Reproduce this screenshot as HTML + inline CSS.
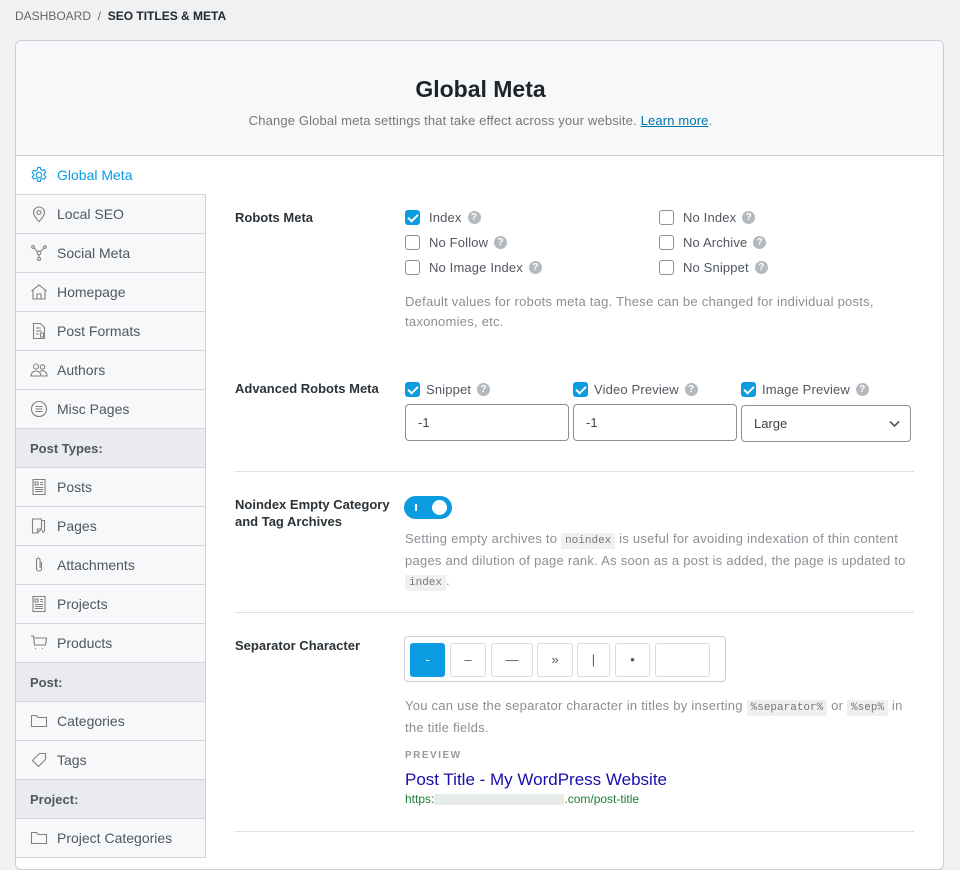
<!DOCTYPE html>
<html><head><meta charset="utf-8"><style>
*{box-sizing:border-box;margin:0;padding:0}
body{width:960px;height:850px;overflow:hidden;background:#f0f1f3;font-family:"Liberation Sans",sans-serif;color:#3c434a;position:relative}
.a{position:absolute}
.bc{left:15px;top:9px;font-size:12px;color:#666}
.bc b{color:#23282d;font-weight:600}
.card{left:15px;top:40px;width:929px;height:830px;background:#fff;border:1px solid #c9ced6;border-radius:6px;overflow:hidden}
.hdr{left:0;top:0;width:929px;height:115px;background:#f7f8fa;border-bottom:1px solid #c9ced6;text-align:center}
.hdr h1{font-size:23px;font-weight:700;color:#1d2327;margin-top:35px}
.hdr p{font-size:13px;color:#777;margin-top:10px;letter-spacing:.15px}
.hdr a{color:#0073aa;text-decoration:underline}
.side{left:0;top:115px;width:190px}
.it{height:39px;border-bottom:1px solid #d4d8de;border-right:1px solid #c9ced6;background:#f7f8fa;font-size:14px;color:#50575e;display:flex;align-items:center;padding-left:14px}
.it svg{width:18px;height:18px;margin-right:9px;stroke:#86807c;fill:none;stroke-width:1.1}
.it.act{background:#fff;border-right:none;color:#0a9be0}
.it.act svg{stroke:#0a9be0}
.gh{height:39px;border-bottom:1px solid #d4d8de;border-right:1px solid #c9ced6;background:#e9ebee;font-size:13px;font-weight:600;color:#50575e;padding-left:14px;line-height:39px}
.lbl{font-size:13px;font-weight:700;color:#2c3338;line-height:17px}
.cb{font-size:13px;color:#50575e;display:flex;align-items:center;letter-spacing:.15px}
.box{width:15px;height:15px;border:1px solid #8c8f94;border-radius:3px;margin-right:9px;background:#fff;display:inline-block}
.box.on{background:#0a9be0;border-color:#0a9be0;position:relative}
.box.on:after{content:"";position:absolute;left:4px;top:1px;width:4px;height:8px;border:solid #fff;border-width:0 2px 2px 0;transform:rotate(45deg)}
.q{display:inline-block;width:13px;height:13px;border-radius:50%;background:#b4b9be;color:#fff;font-size:10px;font-weight:700;text-align:center;line-height:13px;margin-left:6px}
.desc{font-size:13px;color:#8a8f94;line-height:20px;letter-spacing:.25px}
code{font-family:"Liberation Mono",monospace;font-size:11px;background:#f0f0f1;color:#777;padding:2px 4px;letter-spacing:0}
.inp{height:37px;border:1px solid #8c8f94;border-radius:4px;font-size:13px;color:#3c434a;padding:0 12px;line-height:35px;background:#fff}
.hr{left:220px;width:679px;height:1px;background:#dcdfe3}
.sb{top:6px;height:34px;border:1px solid #dcdcde;border-radius:3px;background:#fff;font-size:13px;color:#50575e;text-align:center;line-height:32px}
</style></head><body>
<div class="a bc">DASHBOARD&nbsp;&nbsp;/&nbsp;&nbsp;<b>SEO TITLES &amp; META</b></div>
<div class="a card">
 <div class="a hdr"><h1>Global Meta</h1><p>Change Global meta settings that take effect across your website. <a>Learn more</a>.</p></div>
 <div class="a side">
  <div class="it act"><svg viewBox="0 0 18 18"><circle cx="9" cy="9" r="2.8"/><path d="M7.6 1.5h2.8l.4 2.1 1.6.9 2-.8 1.4 2.4-1.6 1.4v1.8l1.6 1.4-1.4 2.4-2-.8-1.6.9-.4 2.1H7.6l-.4-2.1-1.6-.9-2 .8-1.4-2.4 1.6-1.4V8.1L2.2 6.7l1.4-2.4 2 .8 1.6-.9z"/></svg>Global Meta</div>
  <div class="it"><svg viewBox="0 0 18 18"><path d="M9 16.5s-5.5-5.5-5.5-9a5.5 5.5 0 0111 0c0 3.5-5.5 9-5.5 9z"/><circle cx="9" cy="7.5" r="2"/></svg>Local SEO</div>
  <div class="it"><svg viewBox="0 0 18 18"><circle cx="3" cy="3" r="1.3"/><circle cx="15" cy="3" r="1.3"/><circle cx="9" cy="15" r="1.5"/><circle cx="9" cy="9" r="1.8"/><path d="M4 4l3.6 3.6M14 4l-3.6 3.6M9 11v2.5"/></svg>Social Meta</div>
  <div class="it"><svg viewBox="0 0 18 18"><path d="M1.5 8L9 2l7.5 6M3 7v9h12V7M7 16v-5h4v5"/></svg>Homepage</div>
  <div class="it"><svg viewBox="0 0 18 18"><path d="M3.5 1.5h7l4 4v11h-11zM6 6h5M6 9h6M6 12h3M10.5 11h3v4h-3z"/></svg>Post Formats</div>
  <div class="it"><svg viewBox="0 0 18 18"><circle cx="6" cy="5.5" r="2.5"/><circle cx="12.5" cy="6" r="2.2"/><path d="M1 15c0-3 2.2-5 5-5s5 2 5 5zM10 10.3c.8-.4 1.6-.5 2.5-.5 2.5 0 4.5 1.8 4.5 5.2h-5"/></svg>Authors</div>
  <div class="it"><svg viewBox="0 0 18 18"><circle cx="9" cy="9" r="7.5"/><path d="M5.5 6.5h7M5.5 9h7M5.5 11.5h7"/></svg>Misc Pages</div>
  <div class="gh">Post Types:</div>
  <div class="it"><svg viewBox="0 0 18 18"><path d="M3 1.5h12v15H3zM5 4h3v3H5zM10 4.5h3M10 6.5h3M5 9.5h8M5 11.5h8M5 13.5h8"/></svg>Posts</div>
  <div class="it"><svg viewBox="0 0 18 18"><path d="M2.5 2h9v10l-4 4h-5zM7.5 16v-4h4M12 3.5h2.5v10l-1.2 2-1.3-2"/></svg>Pages</div>
  <div class="it"><svg viewBox="0 0 18 18"><path d="M11.5 6v6.5a2.5 2.5 0 01-5 0V4a1.8 1.8 0 013.6 0v8"/></svg>Attachments</div>
  <div class="it"><svg viewBox="0 0 18 18"><path d="M3 1.5h12v15H3zM5 4h3v3H5zM10 4.5h3M10 6.5h3M5 9.5h8M5 11.5h8M5 13.5h8"/></svg>Projects</div>
  <div class="it"><svg viewBox="0 0 18 18"><path d="M1 2h2.5l1 9h11l1-7H4M5 14.5h1M12 14.5h1"/></svg>Products</div>
  <div class="gh">Post:</div>
  <div class="it"><svg viewBox="0 0 18 18"><path d="M1.5 3.5h5l1.5 2h8.5v9h-15z"/></svg>Categories</div>
  <div class="it"><svg viewBox="0 0 18 18"><path d="M9.5 2.5l6 0 0 6-7 7-6-6zM12.5 5.5l.1.1"/></svg>Tags</div>
  <div class="gh">Project:</div>
  <div class="it"><svg viewBox="0 0 18 18"><path d="M1.5 3.5h5l1.5 2h8.5v9h-15z"/></svg>Project Categories</div>
 </div>
</div>
<div class="a lbl" style="left:235px;top:209px">Robots Meta</div>
<div class="a cb" style="left:405px;top:210px"><span class="box on"></span>Index<span class="q">?</span></div>
<div class="a cb" style="left:405px;top:235px"><span class="box"></span>No Follow<span class="q">?</span></div>
<div class="a cb" style="left:405px;top:260px"><span class="box"></span>No Image Index<span class="q">?</span></div>
<div class="a cb" style="left:659px;top:210px"><span class="box"></span>No Index<span class="q">?</span></div>
<div class="a cb" style="left:659px;top:235px"><span class="box"></span>No Archive<span class="q">?</span></div>
<div class="a cb" style="left:659px;top:260px"><span class="box"></span>No Snippet<span class="q">?</span></div>
<div class="a desc" style="left:405px;top:292px;width:500px">Default values for robots meta tag. These can be changed for individual posts, taxonomies, etc.</div>

<div class="a lbl" style="left:235px;top:380px">Advanced Robots Meta</div>
<div class="a cb" style="left:405px;top:382px"><span class="box on" style="margin-right:6px"></span>Snippet<span class="q">?</span></div>
<div class="a cb" style="left:573px;top:382px"><span class="box on" style="margin-right:6px"></span>Video Preview<span class="q">?</span></div>
<div class="a cb" style="left:741px;top:382px"><span class="box on" style="margin-right:6px"></span>Image Preview<span class="q">?</span></div>
<div class="a inp" style="left:405px;top:404px;width:164px">-1</div>
<div class="a inp" style="left:573px;top:404px;width:164px">-1</div>
<div class="a inp" style="left:741px;top:405px;width:170px">Large<svg class="a" style="right:10px;top:14px" width="11" height="8" viewBox="0 0 11 8"><path d="M1 1.5l4.5 4.5 4.5-4.5" stroke="#50575e" stroke-width="1.6" fill="none"/></svg></div>
<div class="a hr" style="left:235px;top:471px"></div>

<div class="a lbl" style="left:235px;top:496px">Noindex Empty Category<br>and Tag Archives</div>
<div class="a" style="left:404px;top:496px;width:48px;height:23px;border-radius:12px;background:#0a9be0"><div class="a" style="left:11px;top:8px;width:2px;height:7px;background:#fff"></div><div class="a" style="left:28px;top:4px;width:15px;height:15px;border-radius:50%;background:#fff"></div></div>
<div class="a desc" style="left:405px;top:529px;width:510px">Setting empty archives to <code>noindex</code> is useful for avoiding indexation of thin content pages and dilution of page rank. As soon as a post is added, the page is updated to <code>index</code>.</div>
<div class="a hr" style="left:235px;top:612px"></div>

<div class="a lbl" style="left:235px;top:637px">Separator Character</div>
<div class="a" style="left:404px;top:636px;width:322px;height:46px;border:1px solid #c9ced6;border-radius:4px">
 <div class="a sb" style="left:5px;width:35px;background:#0a9be0;border-color:#0a9be0;color:#fff">-</div>
 <div class="a sb" style="left:45px;width:36px">–</div>
 <div class="a sb" style="left:86px;width:42px">—</div>
 <div class="a sb" style="left:132px;width:36px">»</div>
 <div class="a sb" style="left:172px;width:33px">|</div>
 <div class="a sb" style="left:210px;width:35px">•</div>
 <div class="a sb" style="left:250px;width:55px"></div>
</div>
<div class="a desc" style="left:405px;top:696px;width:515px">You can use the separator character in titles by inserting <code>%separator%</code> or <code>%sep%</code> in the title fields.</div>
<div class="a" style="left:405px;top:750px;font-size:10px;font-weight:700;letter-spacing:1.5px;color:#999">PREVIEW</div>
<div class="a" style="left:405px;top:770px;font-size:17px;color:#1a0dab">Post Title - My WordPress Website</div>
<div class="a" style="left:405px;top:792px;font-size:12px;color:#1e7e34">https:<span style="display:inline-block;width:130px;height:11px;background:#e8ece9;vertical-align:middle"></span>.com/post-title</div>
<div class="a hr" style="left:235px;top:831px"></div>
</body></html>
